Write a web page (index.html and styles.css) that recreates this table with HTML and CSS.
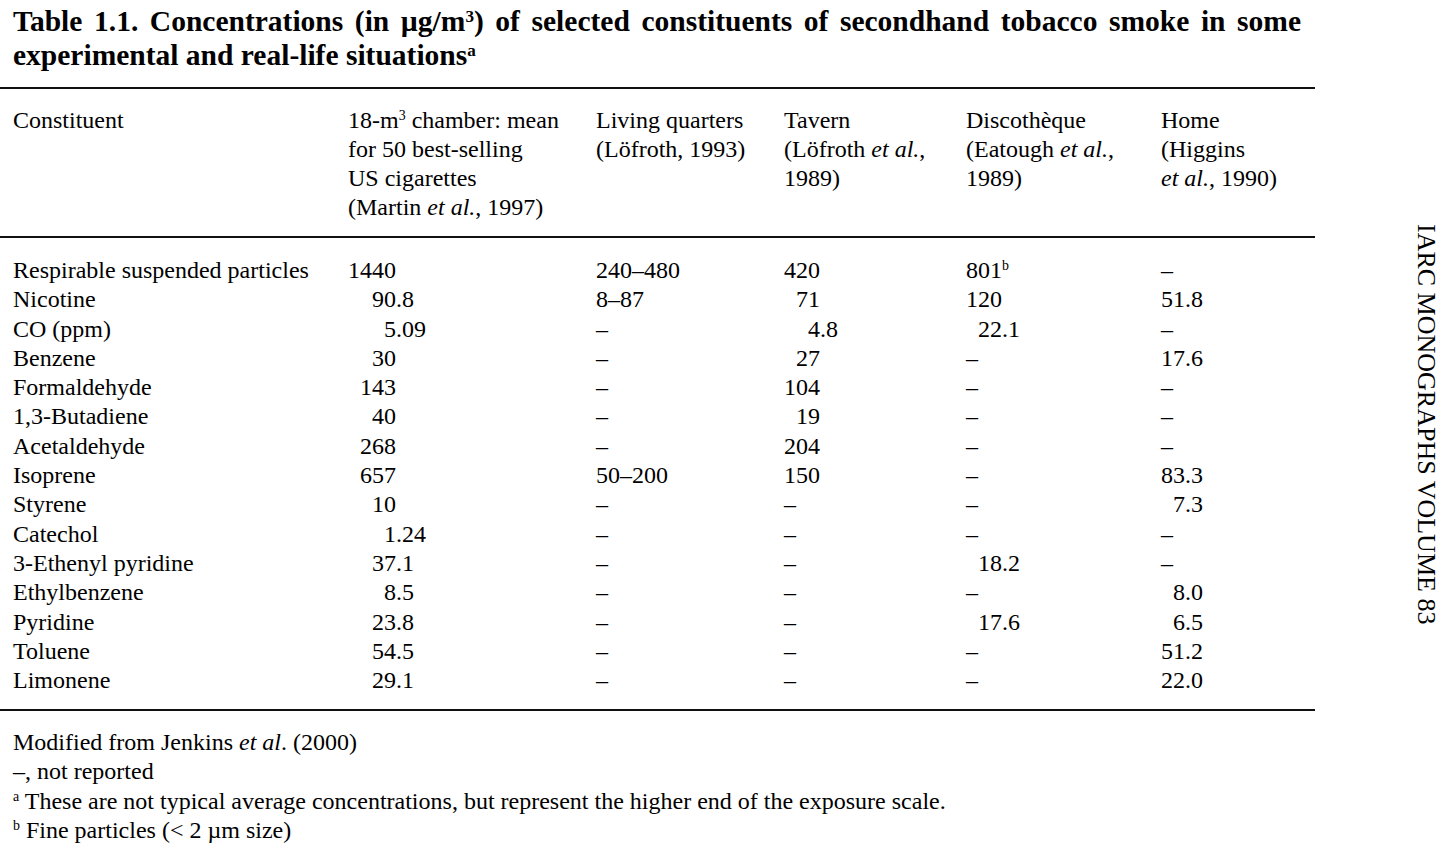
FILE: index.html
```html
<!DOCTYPE html>
<html lang="en">
<head>
<meta charset="utf-8">
<title>Table 1.1</title>
<link rel="stylesheet" href="styles.css">
</head>
<body>
<div class="page">
  <main class="sheet">
    <h1 class="title">
      <span class="title-line">Table 1.1. Concentrations (in µg/m<sup>3</sup>) of selected constituents of secondhand tobacco smoke in some</span>
      <span class="title-rest">experimental and real-life situations<sup>a</sup></span>
    </h1>
    <table class="data">
      <colgroup>
        <col class="c1"><col class="c2"><col class="c3"><col class="c4"><col class="c5"><col class="c6">
      </colgroup>
      <thead>
        <tr>
          <th>Constituent</th>
          <th>18-m<sup>3</sup> chamber: mean<br>for 50 best-selling<br>US cigarettes<br>(Martin <i>et al.</i>, 1997)</th>
          <th>Living quarters<br>(Löfroth, 1993)</th>
          <th>Tavern<br>(Löfroth <i>et al.</i>,<br>1989)</th>
          <th>Discothèque<br>(Eatough <i>et al.</i>,<br>1989)</th>
          <th>Home<br>(Higgins<br><i>et al.</i>, 1990)</th>
        </tr>
      </thead>
      <tbody>
        <tr><td>Respirable suspended particles</td><td><span class="n4">1440</span></td><td>240–480</td><td><span class="n3">420</span></td><td><span class="n3">801</span><sup>b</sup></td><td>–</td></tr>
        <tr><td>Nicotine</td><td><span class="n4">90</span>.8</td><td>8–87</td><td><span class="n3">71</span></td><td><span class="n3">120</span></td><td><span class="n2">51</span>.8</td></tr>
        <tr><td>CO (ppm)</td><td><span class="n4">5</span>.09</td><td>–</td><td><span class="n3">4</span>.8</td><td><span class="n3">22</span>.1</td><td>–</td></tr>
        <tr><td>Benzene</td><td><span class="n4">30</span></td><td>–</td><td><span class="n3">27</span></td><td>–</td><td><span class="n2">17</span>.6</td></tr>
        <tr><td>Formaldehyde</td><td><span class="n4">143</span></td><td>–</td><td><span class="n3">104</span></td><td>–</td><td>–</td></tr>
        <tr><td>1,3-Butadiene</td><td><span class="n4">40</span></td><td>–</td><td><span class="n3">19</span></td><td>–</td><td>–</td></tr>
        <tr><td>Acetaldehyde</td><td><span class="n4">268</span></td><td>–</td><td><span class="n3">204</span></td><td>–</td><td>–</td></tr>
        <tr><td>Isoprene</td><td><span class="n4">657</span></td><td>50–200</td><td><span class="n3">150</span></td><td>–</td><td><span class="n2">83</span>.3</td></tr>
        <tr><td>Styrene</td><td><span class="n4">10</span></td><td>–</td><td>–</td><td>–</td><td><span class="n2">7</span>.3</td></tr>
        <tr><td>Catechol</td><td><span class="n4">1</span>.24</td><td>–</td><td>–</td><td>–</td><td>–</td></tr>
        <tr><td>3-Ethenyl pyridine</td><td><span class="n4">37</span>.1</td><td>–</td><td>–</td><td><span class="n3">18</span>.2</td><td>–</td></tr>
        <tr><td>Ethylbenzene</td><td><span class="n4">8</span>.5</td><td>–</td><td>–</td><td>–</td><td><span class="n2">8</span>.0</td></tr>
        <tr><td>Pyridine</td><td><span class="n4">23</span>.8</td><td>–</td><td>–</td><td><span class="n3">17</span>.6</td><td><span class="n2">6</span>.5</td></tr>
        <tr><td>Toluene</td><td><span class="n4">54</span>.5</td><td>–</td><td>–</td><td>–</td><td><span class="n2">51</span>.2</td></tr>
        <tr><td>Limonene</td><td><span class="n4">29</span>.1</td><td>–</td><td>–</td><td>–</td><td><span class="n2">22</span>.0</td></tr>
      </tbody>
    </table>
    <div class="notes">
      <p>Modified from Jenkins <i>et al</i>. (2000)</p>
      <p>–, not reported</p>
      <p><sup>a</sup> These are not typical average concentrations, but represent the higher end of the exposure scale.</p>
      <p><sup>b</sup> Fine particles (&lt; 2 µm size)</p>
    </div>
  </main>
  <aside class="running-head">IARC MONOGRAPHS VOLUME 83</aside>
</div>
</body>
</html>
```

FILE: styles.css
```css
html, body {
  margin: 0;
  padding: 0;
  background: #fff;
}

body {
  color: #000;
  font-family: "Liberation Serif", "Times New Roman", serif;
  font-size: 24px;
  line-height: 29.3px;
}

.page {
  display: flex;
  align-items: flex-start;
}

.sheet {
  flex: none;
  width: 1315px;
}

sup {
  font-size: 0.58em;
  line-height: 0;
  vertical-align: 0.55em;
}

.title {
  margin: 0;
  padding: 4px 14px 0 13px;
  font-size: 29.5px;
  line-height: 34px;
  font-weight: bold;
}

.title-line {
  display: block;
  text-align: justify;
  text-align-last: justify;
}

.title-rest {
  display: block;
}

.data {
  margin-top: 15px;
  width: 1315px;
  table-layout: fixed;
  border-collapse: separate;
  border-spacing: 0;
  border-top: 2px solid #111;
  border-bottom: 2px solid #111;
}

.c1 { width: 348px; }
.c2 { width: 248px; }
.c3 { width: 188px; }
.c4 { width: 182px; }
.c5 { width: 195px; }
.c6 { width: 154px; }

.data th,
.data td {
  padding: 0;
  text-align: left;
  vertical-align: top;
  font-weight: normal;
  white-space: nowrap;
}

.data th:first-child,
.data td:first-child {
  padding-left: 13px;
}

.data th {
  padding-top: 16.5px;
  padding-bottom: 13.3px;
  border-bottom: 2px solid #111;
}

.data tbody tr:first-child td {
  padding-top: 18px;
}

.data tbody tr:last-child td {
  padding-bottom: 13.5px;
}

.n4, .n3, .n2 {
  display: inline-block;
  text-align: right;
}

.n4 { width: 4ch; }
.n3 { width: 3ch; }
.n2 { width: 2ch; }

.notes {
  padding: 17px 0 0 13px;
}

.notes p {
  margin: 0;
}

.running-head {
  flex: none;
  margin: 224px 0 0 96px;
  writing-mode: vertical-rl;
  font-size: 26px;
  line-height: 30px;
  white-space: nowrap;
}
```
